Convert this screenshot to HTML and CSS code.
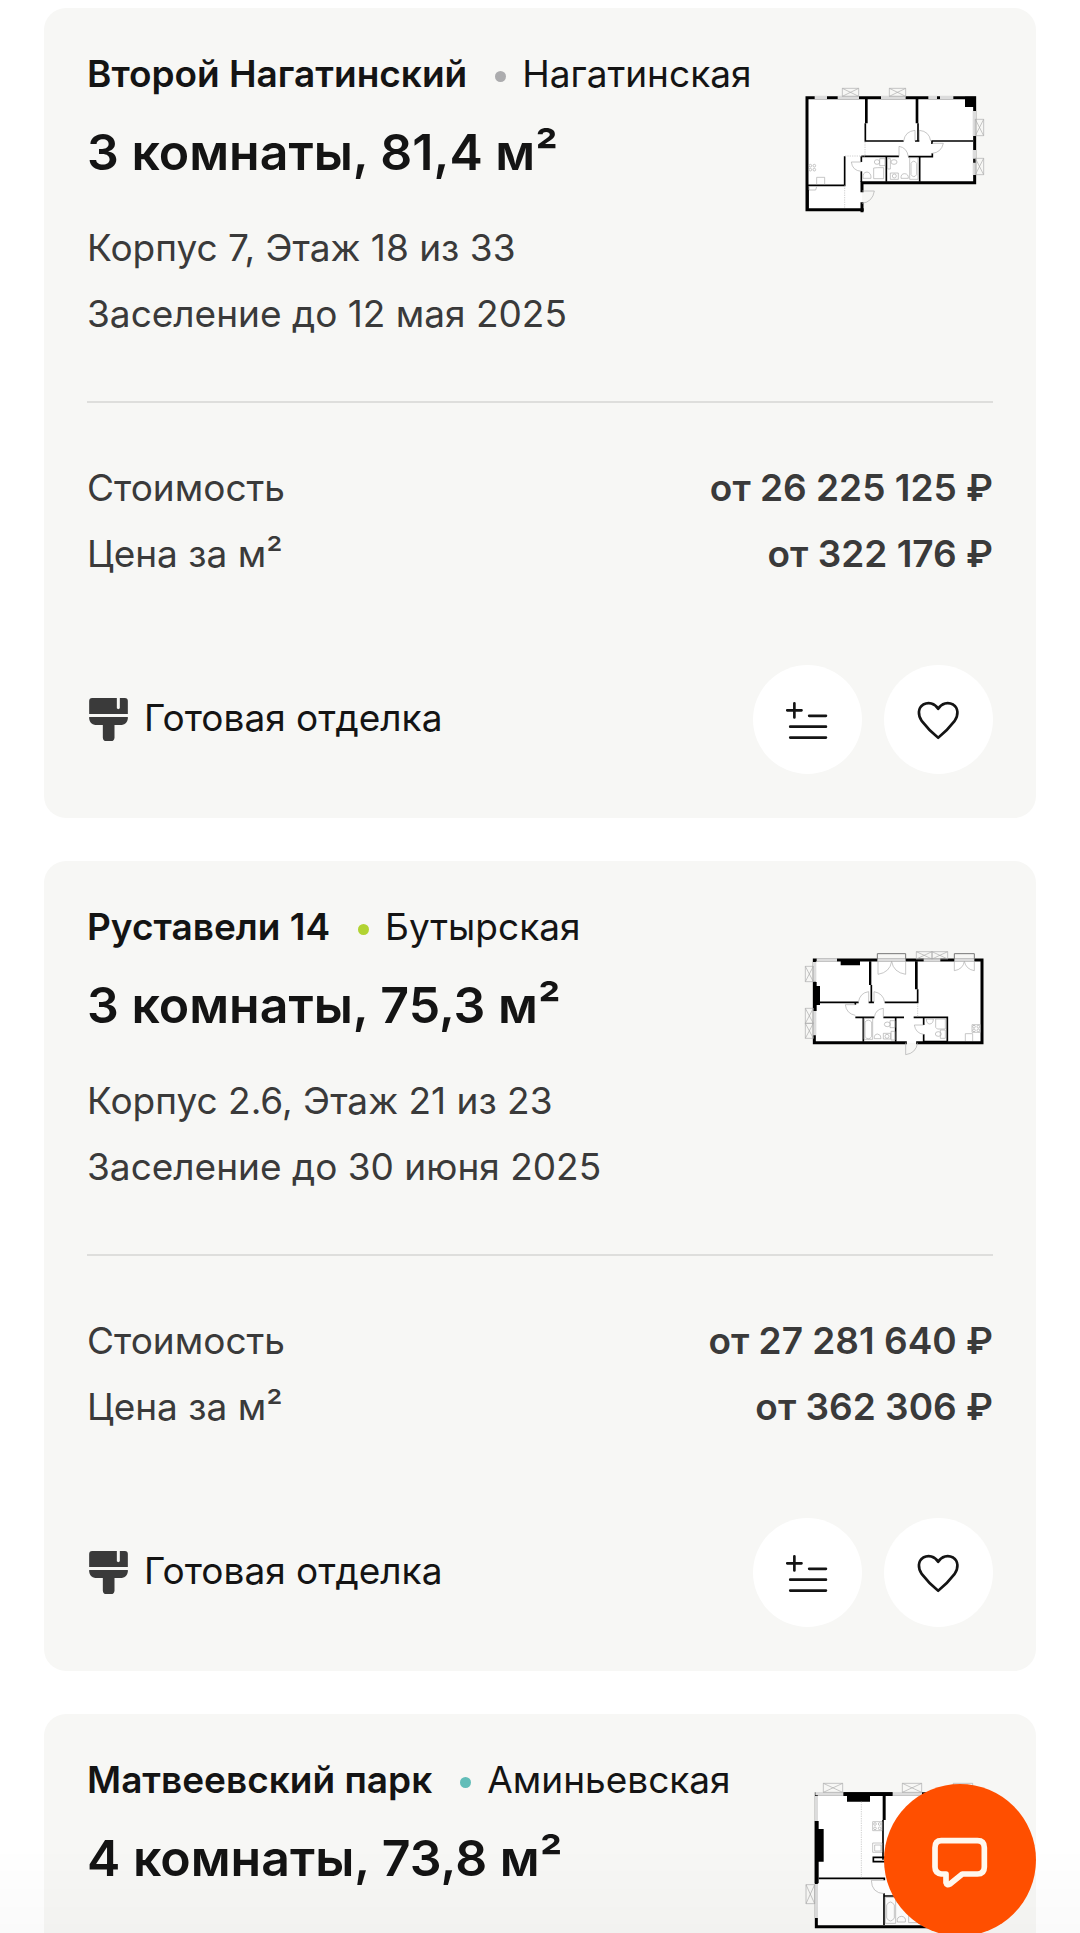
FILE: index.html
```html
<!DOCTYPE html>
<html lang="ru">
<head>
<meta charset="utf-8">
<meta name="viewport" content="width=device-width, initial-scale=1">
<title>Квартиры</title>
<link rel="stylesheet" href="styles.css">
</head>
<body>
<svg class="sprite" aria-hidden="true">
  <symbol id="brush" viewBox="148 174 116 129">
    <path d="M157 174H231V205Q235 210 240 205V174H255Q264 174 264 183V222H148V183Q148 174 157 174ZM148 231H264V236Q262 252 246 255H224V293Q223 303 214 303H199Q190 303 189 293V255H166Q150 252 148 236Z" fill="#3a3a3a"/>
  </symbol>
  <symbol id="compare" viewBox="69 74 328 328">
    <path d="M193.500 189V232M172 210.500H215M238 227H288.500M181 259.500H288.500M181 292.500H288.500" fill="none" stroke="#141414" stroke-width="8" stroke-linecap="round"/>
  </symbol>
  <symbol id="heart" viewBox="461 74 328 328">
    <path d="M624 293C606 279 588 260 575 243C562 225 563 203 579 193C594 185 614 188 624 206C634 188 654 185 669 193C685 203 686 225 673 243C660 260 642 279 624 293Z" fill="none" stroke="#141414" stroke-width="8" stroke-linejoin="round"/>
  </symbol>
</svg>

<main class="list">
  <article class="card">
    <header class="card-head">
      <div class="info">
        <p class="place"><b class="project">Второй Нагатинский</b><i class="dot dot-gray"></i><span>Нагатинская</span></p>
        <h2 class="title">3 комнаты, 81,4 м²</h2>
        <p class="details">Корпус 7, Этаж 18 из 33<br>Заселение до 12 мая 2025</p>
      </div>
      <svg class="plan" viewBox="33 0 576 450" role="img" aria-label="Планировка">
        <path class="floor" d="M51 82H554V338H216V418H51Z"/>
        <path class="wall" d="M51 418V83H554V338H216M51 419H217M216 338V362M216 401V422"/>
        <path class="block" d="M525 80H558V111H525ZM225 86H233V160H225ZM377 86H385V160H377Z"/>
        <path class="thin" d="M226 160V213H341M375 213H388M384 160V213M424 213H549M426 213V222M427 250V260H355M226 160V213M54 346H164V259M214 259H327M214 259V276M214 304V336M289 260V335M389 260V335M54 350V416"/>
        <path class="window" d="M74 82H111M143 82H207M273 82H347M415 82H441M450 82H490M553 123V198M553 240V266M553 278V315"/>
        <path class="line" d="M157 55H206V79H157ZM157 55L206 79M206 55L157 79M298 55H347V79H298ZM298 55L347 79M347 55L298 79M556 148H581V197H556ZM556 148L581 197M581 148L556 197M556 265H581V314H556ZM556 265L581 314M581 265L556 314M341 213Q345 184 375 181V213M388 181V213M388 181Q418 184 422 213M427 220H460Q454 247 427 250M327 260V229Q351 233 355 260M214 304Q187 302 184 276H214M216 363H253Q248 396 216 400M80 343V322H104V343M57 350V360H77L80 350M251 294L263 293H281V326H251ZM219 325Q217 307 231 306Q244 308 243 325ZM301 309H325V328H301ZM333 325Q332 311 344 311Q356 312 355 325ZM359 263H384V328H359ZM363 280Q371 267 380 280V314Q371 326 363 314Z"/>
        <path class="dash" d="M225 216V258H165M164 346V416"/>
        <g class="line"><circle cx="61" cy="287" r="4"/><circle cx="73" cy="287" r="4"/><circle cx="61" cy="299" r="4"/><circle cx="73" cy="299" r="4"/><circle cx="313" cy="318" r="6"/><ellipse cx="261" cy="276" rx="8" ry="7"/><path d="M269 266H285V287H269ZM293 266H301V297H293Z"/><ellipse cx="312" cy="276" rx="9" ry="7"/></g>
      </svg>
    </header>
    <hr class="divider">
    <dl class="prices">
      <div class="price"><dt>Стоимость</dt><dd>от 26 225 125 ₽</dd></div>
      <div class="price"><dt>Цена за м²</dt><dd>от 322 176 ₽</dd></div>
    </dl>
    <footer class="card-foot">
      <svg class="brush" aria-hidden="true"><use href="#brush"/></svg>
      <span class="finish">Готовая отделка</span>
      <button class="round" type="button" aria-label="Сравнить"><svg><use href="#compare"/></svg></button>
      <button class="round" type="button" aria-label="В избранное"><svg><use href="#heart"/></svg></button>
    </footer>
  </article>

  <article class="card">
    <header class="card-head">
      <div class="info">
        <p class="place"><b class="project">Руставели 14</b><i class="dot dot-green"></i><span>Бутырская</span></p>
        <h2 class="title">3 комнаты, 75,3 м²</h2>
        <p class="details">Корпус 2.6, Этаж 21 из 23<br>Заселение до 30 июня 2025</p>
      </div>
      <svg class="plan" viewBox="33 -21 576 450" role="img" aria-label="Планировка">
        <path class="floor" d="M73 90H576V338H73Z"/>
        <path class="wall" d="M73 90H576V338H383M346 338H73V90"/>
        <path class="block" d="M152 90H210V106H152ZM69 156H80V168H90V225H80V243H69ZM237 94H244V165H237ZM375 94H383V178H375Z"/>
        <path class="thin" d="M90 217H206M236 217H252M284 217H383V178M244 165V217M196 217V224M196 262H253M280 262H342M220 262V335M317 262V335M371 262H472V335M401 262V285M401 313V335H472"/>
        <path class="window" d="M80 90H141M262 90H347M401 90H451M493 90H553M74 96V155M74 243V316"/>
        <path class="rail" d="M262 88V71H347V88M493 88V71H553V88"/>
        <path class="line" d="M46 109H70V155H46ZM46 109L70 155M70 109L46 155M46 235H70V280H46ZM46 235L70 280M70 235L46 280M46 280H70V325H46ZM46 280L70 325M70 280L46 325M379 65H426V87H379ZM379 65L426 87M426 65L379 87M426 65H473V87H426ZM426 65L473 87M473 65L426 87M264 94V133Q300 127 305 94Q310 127 347 133V94M493 94V122Q519 118 523 94Q528 118 553 122V94M205 217Q210 188 236 185V217M252 217V185Q280 190 284 217M196 224H166Q169 251 196 256M253 262Q256 238 280 235V262M401 285H373Q377 310 401 313M347 338V374Q378 370 383 338M225 276Q235 265 245 276V320Q235 333 225 320ZM222 265H248V328H222ZM253 326Q251 313 263 312Q274 314 273 326ZM280 310H302V327H280ZM409 267H430Q430 281 419 282Q409 281 409 267ZM437 267H466V297H442L437 292ZM526 333V311H548V333M546 284H571V307H546Z"/>
        <path class="dash" d="M383 220V262"/>
        <g class="line"><circle cx="552" cy="290" r="4"/><circle cx="565" cy="290" r="4"/><circle cx="552" cy="301" r="4"/><circle cx="565" cy="301" r="4"/><circle cx="291" cy="319" r="6"/><ellipse cx="292" cy="283" rx="9" ry="7"/><path d="M300 272H315V293H300ZM451 300H466V325H451ZM303 304H315V330H303Z"/><ellipse cx="445" cy="312" rx="9" ry="7"/></g>
      </svg>
    </header>
    <hr class="divider">
    <dl class="prices">
      <div class="price"><dt>Стоимость</dt><dd>от 27 281 640 ₽</dd></div>
      <div class="price"><dt>Цена за м²</dt><dd>от 362 306 ₽</dd></div>
    </dl>
    <footer class="card-foot">
      <svg class="brush" aria-hidden="true"><use href="#brush"/></svg>
      <span class="finish">Готовая отделка</span>
      <button class="round" type="button" aria-label="Сравнить"><svg><use href="#compare"/></svg></button>
      <button class="round" type="button" aria-label="В избранное"><svg><use href="#heart"/></svg></button>
    </footer>
  </article>

  <article class="card card-last">
    <header class="card-head">
      <div class="info">
        <p class="place"><b class="project">Матвеевский парк</b><i class="dot dot-teal"></i><span>Аминьевская</span></p>
        <h2 class="title">4 комнаты, 73,8 м²</h2>
      </div>
      <svg class="plan" viewBox="63 48 576 450" role="img" aria-label="Планировка">
        <path class="floor" d="M107 101H600V500H107Z"/>
        <path class="wall" d="M600 500H109V101H600"/>
        <path class="block" d="M190 97H338V108H270V125H201V108H190ZM104 183H116V207H131V305H116V370H104ZM308 104H317V180H308Z"/>
        <path class="thin" d="M309 180V299M116 355H313V361M312 400V495M313 408H350M320 292H280V305H320"/>
        <path class="window" d="M106 101H190M338 101H426M109 108V183M109 372V474"/>
        <path class="line" d="M130 70H188V97H130ZM130 70L188 97M188 70L130 97M367 70H425V97H367ZM367 70L425 97M425 70L367 97M520 70H578V97H520ZM78 374H104V431H78ZM78 374L104 431M104 374L78 431M278 185H306V212H278ZM278 249H306V277H278ZM284 255H303V273H284ZM274 361H312M274 361Q275 399 312 401M316 412H347V490H316ZM320 435Q331 417 343 435V474Q331 492 320 474ZM352 486Q349 470 365 469Q379 471 376 486ZM386 460H412V488H386Z"/>
        <path class="dash" d="M244 125V354"/>
        <g class="line"><circle cx="285" cy="192" r="4"/><circle cx="299" cy="192" r="4"/><circle cx="285" cy="205" r="4"/><circle cx="299" cy="205" r="4"/></g>
      </svg>
    </header>
  </article>
</main>

<div class="shade"></div>
<button class="chat" type="button" aria-label="Чат">
  <svg viewBox="312 71 456 456"><path d="M484 241H592Q613 241 613 262V320Q613 341 592 341H547L510 371Q500 376 498 367V341H484Q465 338 465 320V262Q465 241 484 241Z" fill="none" stroke="#fff8ee" stroke-width="17" stroke-linejoin="round"/></svg>
</button>
</body>
</html>
```
FILE: styles.css
```css
* { box-sizing: border-box; }

body {
  margin: 0;
  background: #fff;
  color: #141414;
  font: 400 37px/66px Inter, "Liberation Sans", sans-serif;
}

p, h2, dl, dd { margin: 0; }

.sprite { position: absolute; width: 0; height: 0; }

.list {
  display: flex;
  flex-direction: column;
  gap: 43px;
  min-height: 100vh;
  padding: 8px 44px 0;
}

.card {
  padding: 36px 43px 44px;
  border-radius: 22px;
  background: #f7f7f5;
}

.card-last {
  flex: 1;
  padding-bottom: 0;
  border-radius: 22px 22px 0 0;
}

.card-head { display: flex; justify-content: space-between; }
.info { flex: 1; min-width: 0; }

.place {
  display: flex;
  align-items: center;
  line-height: 60px;
  white-space: nowrap;
}

.project { font-weight: 600; }

.dot {
  width: 11px;
  height: 11px;
  margin: 4px 16px 0 28px;
  border-radius: 50%;
}

.dot-gray { background: #acacae; }
.dot-green { background: #b1d332; }
.dot-teal { background: #62bdb8; }

.title {
  margin-top: 12px;
  font-size: 50px;
  font-weight: 600;
  line-height: 72px;
  white-space: nowrap;
}

.details { margin-top: 27px; color: #3a3a3a; }

.plan {
  flex: none;
  width: 192px;
  height: 150px;
  margin-top: 26px;
  overflow: visible;
  fill: none;
}

.floor { fill: #fff; }
.wall { stroke: #000; stroke-width: 9; stroke-linecap: square; }
.block { fill: #000; }
.thin { stroke: #000; stroke-width: 5; }
.window { stroke: #dcdcdc; stroke-width: 10; }
.rail { stroke: #777; stroke-width: 3; }
.line { stroke: #aaa; stroke-width: 2; }
.dash { stroke: #bbb; stroke-width: 2; stroke-dasharray: 4 3; }

.divider {
  height: 2px;
  margin: 54px 0 52px;
  border: 0;
  background: #dededc;
}

.prices { color: #3a3a3a; }
.price { display: flex; justify-content: space-between; }
.price dd { font-weight: 600; }

.card-foot {
  display: flex;
  align-items: center;
  gap: 22px;
  margin-top: 78px;
}

.brush { width: 39px; height: 43px; margin: 0 -6px 0 2px; }
.finish { flex: 1; padding-bottom: 4px; }

.round {
  width: 109px;
  height: 109px;
  padding: 0;
  border: 0;
  border-radius: 50%;
  background: #fff;
}

.round svg, .chat svg { display: block; width: 100%; height: 100%; }

.shade {
  position: fixed;
  inset: auto 0 0;
  height: 88px;
  background: linear-gradient(rgba(0, 0, 0, 0), rgba(0, 0, 0, .02));
  pointer-events: none;
}

.chat {
  position: fixed;
  right: 44px;
  bottom: -3px;
  width: 152px;
  height: 152px;
  padding: 0;
  border: 0;
  border-radius: 50%;
  background: #ff4f00;
}
```
